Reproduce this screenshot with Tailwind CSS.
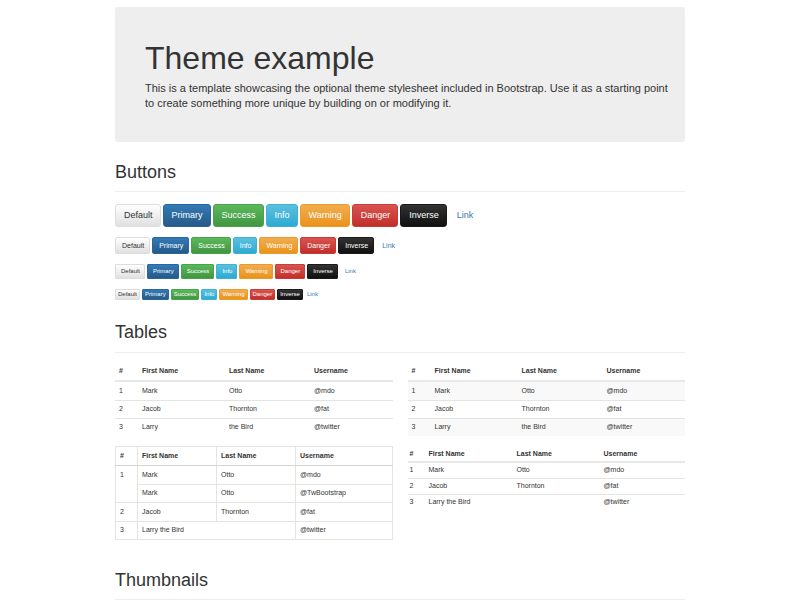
<!DOCTYPE html>
<html lang="en">
<head>
<meta charset="utf-8">
<meta name="viewport" content="width=device-width, initial-scale=1">
<title>Theme example</title>
<script src="https://cdn.jsdelivr.net/npm/@tailwindcss/browser@4"></script>
</head>
<body class="bg-white text-[#333] font-['Liberation_Sans',Arial,sans-serif] text-[7px] leading-[10px]">
<main class="mx-auto max-w-[600px] px-[15px] pt-[7px]">

  <header class="rounded-[3px] bg-[#eee] pt-[33px] pb-[31px] pl-[30px] pr-[15px]">
    <h1 class="text-[32px] leading-[36px]">Theme example</h1>
    <p class="mt-[5px] max-w-[525px] text-[11px] leading-[15px]">This is a template showcasing the optional theme stylesheet included in Bootstrap. Use it as a starting point to create something more unique by building on or modifying it.</p>
  </header>

  <section>
    <h2 class="mt-[20px] mb-[12px] border-b border-[#eee] pb-[9px] text-[18px] leading-[20px]">Buttons</h2>
    <div class="grid gap-[10px] [&>div]:flex [&>div]:items-center [&>div]:gap-[2px] [&_button]:border [&_button]:bg-linear-to-b">
      <div class="text-[9px] leading-[21px] [&_button]:rounded-[3px] [&>*]:pl-[8px] [&>*]:pr-[7px]">
        <button type="button" class="border-[#ddd] from-white to-[#e0e0e0]">Default</button>
        <button type="button" class="border-[#2b669a] from-[#337ab7] to-[#265a88] text-white">Primary</button>
        <button type="button" class="border-[#4aa34a] from-[#5cb85c] to-[#419641] text-white">Success</button>
        <button type="button" class="border-[#3eb2d5] from-[#5bc0de] to-[#2aabd2] text-white">Info</button>
        <button type="button" class="border-[#ea9b2c] from-[#f0ad4e] to-[#eb9316] text-white">Warning</button>
        <button type="button" class="border-[#c93c38] from-[#d9534f] to-[#c12e2a] text-white">Danger</button>
        <button type="button" class="border-[#1a1a1a] from-[#333] to-[#111] text-white">Inverse</button>
        <a href="#" class="text-[#337ab7]">Link</a>
      </div>
      <div class="text-[7px] leading-[15px] [&_button]:rounded-[2px] [&>*]:pl-[6px] [&>*]:pr-[5px]">
        <button type="button" class="border-[#ddd] from-white to-[#e0e0e0]">Default</button>
        <button type="button" class="border-[#2b669a] from-[#337ab7] to-[#265a88] text-white">Primary</button>
        <button type="button" class="border-[#4aa34a] from-[#5cb85c] to-[#419641] text-white">Success</button>
        <button type="button" class="border-[#3eb2d5] from-[#5bc0de] to-[#2aabd2] text-white">Info</button>
        <button type="button" class="border-[#ea9b2c] from-[#f0ad4e] to-[#eb9316] text-white">Warning</button>
        <button type="button" class="border-[#c93c38] from-[#d9534f] to-[#c12e2a] text-white">Danger</button>
        <button type="button" class="border-[#1a1a1a] from-[#333] to-[#111] text-white">Inverse</button>
        <a href="#" class="text-[#337ab7]">Link</a>
      </div>
      <div class="text-[6px] leading-[13px] [&_button]:rounded-[1px] [&>*]:pl-[5px] [&>*]:pr-[4px]">
        <button type="button" class="border-[#ddd] from-white to-[#e0e0e0]">Default</button>
        <button type="button" class="border-[#2b669a] from-[#337ab7] to-[#265a88] text-white">Primary</button>
        <button type="button" class="border-[#4aa34a] from-[#5cb85c] to-[#419641] text-white">Success</button>
        <button type="button" class="border-[#3eb2d5] from-[#5bc0de] to-[#2aabd2] text-white">Info</button>
        <button type="button" class="border-[#ea9b2c] from-[#f0ad4e] to-[#eb9316] text-white">Warning</button>
        <button type="button" class="border-[#c93c38] from-[#d9534f] to-[#c12e2a] text-white">Danger</button>
        <button type="button" class="border-[#1a1a1a] from-[#333] to-[#111] text-white">Inverse</button>
        <a href="#" class="text-[#337ab7]">Link</a>
      </div>
      <div class="text-[6px] leading-[9px] [&_button]:rounded-[1px] [&>*]:px-[2px]">
        <button type="button" class="border-[#ddd] from-white to-[#e0e0e0]">Default</button>
        <button type="button" class="border-[#2b669a] from-[#337ab7] to-[#265a88] text-white">Primary</button>
        <button type="button" class="border-[#4aa34a] from-[#5cb85c] to-[#419641] text-white">Success</button>
        <button type="button" class="border-[#3eb2d5] from-[#5bc0de] to-[#2aabd2] text-white">Info</button>
        <button type="button" class="border-[#ea9b2c] from-[#f0ad4e] to-[#eb9316] text-white">Warning</button>
        <button type="button" class="border-[#c93c38] from-[#d9534f] to-[#c12e2a] text-white">Danger</button>
        <button type="button" class="border-[#1a1a1a] from-[#333] to-[#111] text-white">Inverse</button>
        <a href="#" class="text-[#337ab7]">Link</a>
      </div>
    </div>
  </section>

  <section>
    <h2 class="mt-[22px] mb-[9px] border-b border-[#eee] pb-[10px] text-[18px] leading-[20px]">Tables</h2>
    <div class="grid grid-cols-2 items-start gap-x-[15px] gap-y-[10px] [&_table]:w-full [&_table]:table-fixed [&_table]:border-collapse [&_th]:text-left [&_th]:font-bold">

      <table class="h-[74px] [&_td]:px-[4px] [&_th]:h-[19px] [&_th]:px-[4px]">
        <colgroup><col class="w-[23px]"><col class="w-[87px]"><col class="w-[85px]"><col></colgroup>
        <thead class="border-b-2 border-[#e8e8e8]"><tr><th>#</th><th>First Name</th><th>Last Name</th><th>Username</th></tr></thead>
        <tbody class="divide-y divide-[#e4e4e4]">
          <tr><td>1</td><td>Mark</td><td>Otto</td><td>@mdo</td></tr>
          <tr><td>2</td><td>Jacob</td><td>Thornton</td><td>@fat</td></tr>
          <tr><td>3</td><td>Larry</td><td>the Bird</td><td>@twitter</td></tr>
        </tbody>
      </table>

      <table class="h-[74px] [&_td]:px-[4px] [&_th]:h-[19px] [&_th]:px-[4px]">
        <colgroup><col class="w-[23px]"><col class="w-[87px]"><col class="w-[85px]"><col></colgroup>
        <thead class="border-b-2 border-[#e8e8e8]"><tr><th>#</th><th>First Name</th><th>Last Name</th><th>Username</th></tr></thead>
        <tbody class="divide-y divide-[#e4e4e4]">
          <tr class="odd:bg-[#f9f9f9]"><td>1</td><td>Mark</td><td>Otto</td><td>@mdo</td></tr>
          <tr class="odd:bg-[#f9f9f9]"><td>2</td><td>Jacob</td><td>Thornton</td><td>@fat</td></tr>
          <tr class="odd:bg-[#f9f9f9]"><td>3</td><td>Larry</td><td>the Bird</td><td>@twitter</td></tr>
        </tbody>
      </table>

      <table class="h-[94px] [&_td]:border [&_td]:border-[#e4e4e4] [&_td]:px-[4px] [&_th]:h-[19px] [&_th]:border [&_th]:border-[#e4e4e4] [&_th]:border-b-[#d4d4d4] [&_th]:px-[4px]">
        <colgroup><col class="w-[22px]"><col class="w-[79px]"><col class="w-[79px]"><col></colgroup>
        <thead><tr><th>#</th><th>First Name</th><th>Last Name</th><th>Username</th></tr></thead>
        <tbody>
          <tr><td rowspan="2" class="pt-[4px] align-top">1</td><td>Mark</td><td>Otto</td><td>@mdo</td></tr>
          <tr><td>Mark</td><td>Otto</td><td>@TwBootstrap</td></tr>
          <tr><td>2</td><td>Jacob</td><td>Thornton</td><td>@fat</td></tr>
          <tr><td>3</td><td colspan="2">Larry the Bird</td><td>@twitter</td></tr>
        </tbody>
      </table>

      <table class="h-[63px] [&_td]:px-[2px] [&_th]:h-[16px] [&_th]:px-[2px]">
        <colgroup><col class="w-[19px]"><col class="w-[88px]"><col class="w-[87px]"><col></colgroup>
        <thead class="border-b-2 border-[#e8e8e8]"><tr><th>#</th><th>First Name</th><th>Last Name</th><th>Username</th></tr></thead>
        <tbody class="divide-y divide-[#e4e4e4]">
          <tr><td>1</td><td>Mark</td><td>Otto</td><td>@mdo</td></tr>
          <tr><td>2</td><td>Jacob</td><td>Thornton</td><td>@fat</td></tr>
          <tr><td>3</td><td colspan="2">Larry the Bird</td><td>@twitter</td></tr>
        </tbody>
      </table>
    </div>
  </section>

  <section>
    <h2 class="mt-[30px] border-b border-[#eee] pb-[9px] text-[18px] leading-[20px]">Thumbnails</h2>
  </section>
</main>
</body>
</html>
